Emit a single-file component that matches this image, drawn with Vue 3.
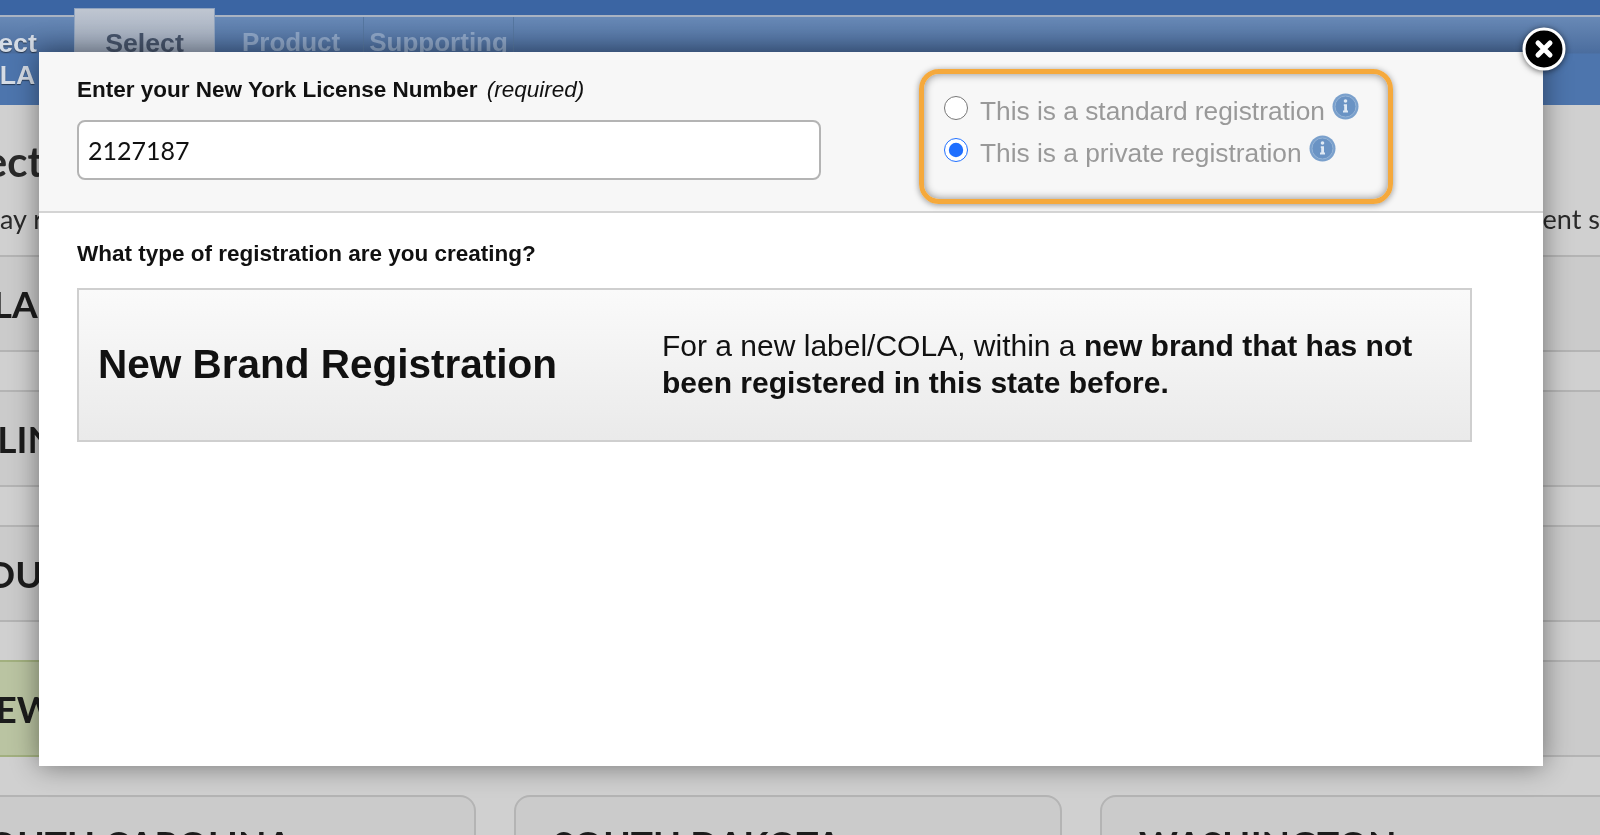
<script setup>
import { ref } from 'vue';

const licenseNumber = ref('2127187');
const regType = ref('private');

const states = [
  { name: 'ALABAMA' }, { name: 'ARIZONA' }, { name: 'ARKANSAS' },
  { name: 'ILLINOIS' }, { name: 'INDIANA' }, { name: 'IOWA' },
  { name: 'LOUISIANA' }, { name: 'MAINE' }, { name: 'MARYLAND' },
  { name: 'NEW YORK', selected: true }, { name: 'OHIO' }, { name: 'OREGON' },
  { name: 'SOUTH CAROLINA' }, { name: 'SOUTH DAKOTA' }, { name: 'WASHINGTON' }
];

const regOptions = [
  { value: 'standard', label: 'This is a standard registration' },
  { value: 'private', label: 'This is a private registration' }
];
</script>

<template>
  <div class="page">
    <div class="topbar"></div>
    <nav class="nav">
      <div class="tab first">Select<br />COLA</div>
      <div class="tab active">Select</div>
      <div class="tab muted">Product</div>
      <div class="tab muted">Supporting</div>
    </nav>

    <main class="content">
      <h1 class="heading">Select</h1>
      <div class="intro">
        <span>ay r</span>
        <span>ent s</span>
      </div>
      <div class="state-grid">
        <div v-for="s in states" :key="s.name" class="state" :class="{ selected: s.selected }">{{ s.name }}</div>
      </div>
    </main>

    <section class="modal">
      <button class="close" aria-label="Close">
        <svg width="46" height="46" viewBox="0 0 46 46">
          <circle cx="23" cy="23" r="20" fill="#000" stroke="#fff" stroke-width="3" />
          <path d="M17 17 L29 29 M29 17 L17 29" stroke="#fff" stroke-width="5" stroke-linecap="round" />
        </svg>
      </button>

      <header class="modal-head">
        <div class="license">
          <label class="label" for="license">Enter your New York License Number <em>(required)</em></label>
          <input id="license" v-model="licenseNumber" class="license-input" type="text" />
        </div>
        <div class="reg-box">
          <label v-for="opt in regOptions" :key="opt.value" class="reg-option">
            <input v-model="regType" class="radio" type="radio" :value="opt.value" />
            <span>{{ opt.label }}</span>
            <svg class="info" width="27" height="27" viewBox="0 0 27 27">
              <circle cx="13.5" cy="13.5" r="13" fill="#7aa0cc" />
              <circle cx="13.5" cy="13.5" r="10.5" fill="#6a93c4" stroke="#94b3d6" stroke-width="1" />
              <circle cx="13.5" cy="8" r="1.8" fill="#dfe9f4" />
              <path d="M11.8 11.2 H15 V17.5 H16 V19.5 H11 V17.5 H12.2 V13 H11.8 Z" fill="#dfe9f4" />
            </svg>
          </label>
        </div>
      </header>

      <div class="modal-body">
        <h2 class="question">What type of registration are you creating?</h2>
        <div class="reg-card">
          <div class="reg-card-title">New Brand Registration</div>
          <p class="reg-card-desc">For a new label/COLA, within a <strong>new brand that has not been registered in this state before.</strong></p>
        </div>
      </div>
    </section>
  </div>
</template>

<style scoped>
.page {
  position: relative;
  width: 1600px;
  height: 835px;
  overflow: hidden;
  background: #d0d0d0;
  font-family: "Liberation Sans", Arial, sans-serif;
  filter: blur(0.4px);
}

.topbar {
  height: 15px;
  background: #3b65a3;
  border-bottom: 2px solid #a9b3c2;
}

.nav {
  height: 88px;
  display: flex;
  background: linear-gradient(#6889b6 0, #4b6d9e 36px, #4d75ad 37px);
  font-weight: bold;
  font-size: 26.7px;
}

.tab {
  text-align: center;
  line-height: 32px;
  padding-top: 9px;
}

.first {
  width: 79px;
  margin-left: -42px;
  margin-right: 37px;
  padding-top: 10px;
  color: #d5dce6;
  text-shadow: 0 1px 1px rgba(0, 0, 0, 0.5);
}

.active {
  width: 141px;
  height: 60px;
  margin-top: -9px;
  padding-top: 18px;
  box-sizing: border-box;
  background: linear-gradient(#bfc6d1, #8d9bb1);
  border: 1px solid #8fa3bf;
  color: #46546b;
}

.muted {
  padding: 9px 23px 0 27px;
  font-size: 26px;
  color: #8ea6c7;
  border-right: 1px solid #55769f;
}

.muted:last-child {
  padding-left: 5px;
  padding-right: 5px;
}

.content {
  font-family: Lato, sans-serif;
  color: #1c1c1c;
}

.heading {
  margin: 0;
  padding-top: 31px;
  margin-left: -71px;
  font-size: 42px;
  line-height: 50px;
  font-weight: 700;
  color: #2a2a2a;
}

.intro {
  display: flex;
  justify-content: space-between;
  font-size: 27px;
  line-height: 34px;
  margin-top: 16px;
  height: 40px;
  color: #2a2a2a;
}

.state-grid {
  display: grid;
  grid-template-columns: repeat(3, 548px);
  gap: 38px;
  margin-left: -72px;
  margin-top: 13px;
}

.state {
  height: 97px;
  box-sizing: border-box;
  padding-left: 37px;
  line-height: 93px;
  font-size: 37px;
  font-weight: 700;
  white-space: nowrap;
  background: #cbcbcb;
  border: 2px solid #b4b4b4;
  border-radius: 16px;
}

.state.selected {
  background: #bac4a2;
  border-color: #a2b07f;
}

.modal {
  position: absolute;
  left: 39px;
  top: 52px;
  width: 1504px;
  height: 714px;
  background: #fff;
  box-shadow: 0 0 26px rgba(0, 0, 0, 0.45);
}

.close {
  position: absolute;
  right: -24px;
  top: -26px;
  width: 46px;
  height: 46px;
  padding: 0;
  border: 0;
  background: none;
  filter: drop-shadow(0 1px 3px rgba(0, 0, 0, 0.6));
}

.modal-head {
  height: 161px;
  box-sizing: border-box;
  display: flex;
  align-items: flex-start;
  padding: 17px 0 0 38px;
  background: #f7f7f7;
  border-bottom: 2px solid #d4d4d4;
}

.license {
  width: 744px;
}

.label {
  display: block;
  font-size: 22.5px;
  line-height: 42px;
  font-weight: bold;
  color: #111;
}

.label em {
  font-weight: normal;
  margin-left: 3px;
}

.license-input {
  display: block;
  width: 100%;
  height: 60px;
  box-sizing: border-box;
  margin-top: 9px;
  padding: 0 9px;
  background: #fff;
  border: 2px solid #b4b4b4;
  border-radius: 8px;
  font-family: Lato, sans-serif;
  font-size: 25px;
  color: #111;
}

.reg-box {
  width: 474px;
  height: 135px;
  box-sizing: border-box;
  margin-left: 98px;
  padding: 16px 0 0 20px;
  border: 5px solid #f5a93c;
  border-radius: 20px;
  box-shadow: 0 1px 6px rgba(0, 0, 0, 0.4), inset 0 0 8px rgba(0, 0, 0, 0.45);
}

.reg-option {
  display: flex;
  align-items: center;
  height: 42px;
  font-size: 26.3px;
  color: #999;
}

.radio {
  width: 24px;
  height: 24px;
  margin: -6px 12px 0 0;
  accent-color: #1f6fff;
}

.info {
  margin: -10px 0 0 7px;
}

.modal-body {
  padding: 28px 71px 0 38px;
}

.question {
  margin: 0;
  font-size: 22.5px;
  line-height: 26px;
  font-weight: bold;
  color: #111;
}

.reg-card {
  display: flex;
  align-items: center;
  height: 154px;
  box-sizing: border-box;
  margin-top: 21px;
  padding: 0 40px 2px 19px;
  background: linear-gradient(#fafafa, #eaeaea);
  border: 2px solid #cfcfcf;
}

.reg-card-title {
  width: 564px;
  flex: none;
  font-size: 40.5px;
  font-weight: bold;
  color: #111;
}

.reg-card-desc {
  margin: 0;
  font-size: 30px;
  line-height: 37px;
  color: #111;
}
</style>
